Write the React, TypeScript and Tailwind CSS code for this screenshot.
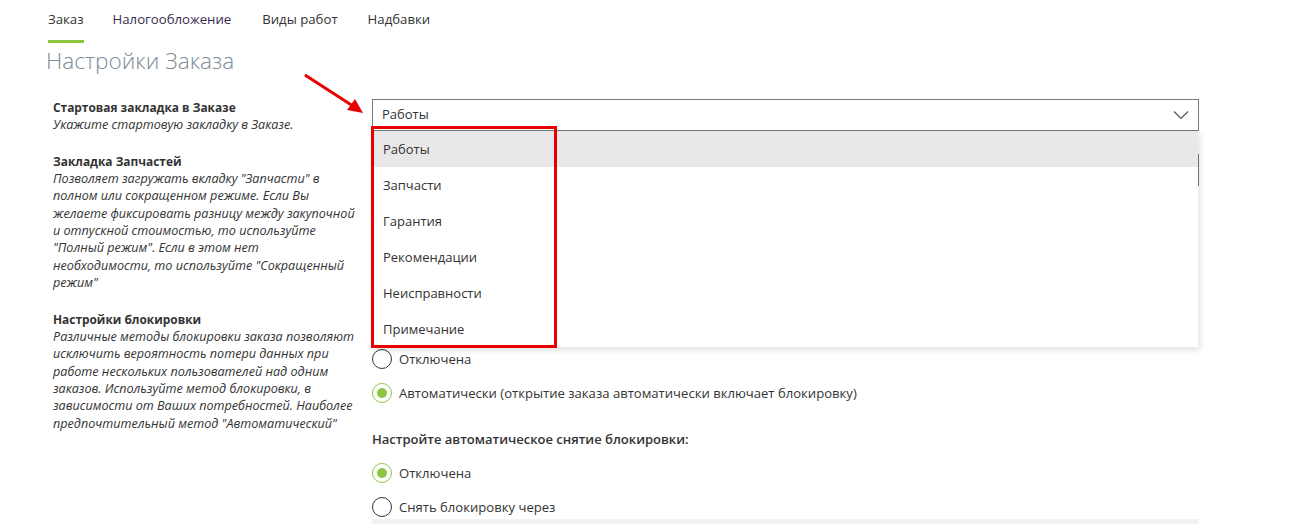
import React from "react";

const font = { fontFamily: '"Open Sans", "Noto Sans", sans-serif' };

function Radio({ checked, label, last }: { checked?: boolean; label: string; last?: boolean }) {
  return (
    <div className={`flex items-center gap-[7px] ${last ? "h-[29px] items-start pt-[7px]" : "h-[34px]"}`}>
      {checked ? (
        <span className="flex h-[20px] w-[20px] items-center justify-center rounded-full border-[1.5px] border-[#8cc63f]">
          <span className="h-[10px] w-[10px] rounded-full bg-[#8cc63f]" />
        </span>
      ) : (
        <span className="h-[20px] w-[20px] rounded-full border-[1.5px] border-[#333]" />
      )}
      <span className="text-[13.1px] leading-[20px] text-[#333]">{label}</span>
    </div>
  );
}

function Select({ value }: { value?: string }) {
  return (
    <div className="flex h-[32px] items-center justify-between border border-[#7a7a7a] bg-white pl-[9px] pr-[9px]">
      <span className="text-[13px] text-[#333]">{value}</span>
      <svg width="16" height="10" viewBox="0 0 16 10" fill="none">
        <path d="M1 1.5 L8 8.5 L15 1.5" stroke="#555" strokeWidth="1.2" />
      </svg>
    </div>
  );
}

const labelCls = "text-[11.9px] font-bold leading-[17px] text-[#333]";
const descCls = "text-[12.6px] italic leading-[17.3px] text-[#333]";

export default function App() {
  const items = ["Работы", "Запчасти", "Гарантия", "Рекомендации", "Неисправности", "Примечание"];
  return (
    <div className="relative h-[524px] w-[1300px] overflow-hidden bg-white" style={font}>
      {/* Tabs */}
      <div className="flex pl-[48px] pt-[10px] text-[13.2px]">
        <div className="mr-[29px] border-b-[3px] border-[#8cc63f] pb-[10px] text-[#333]">Заказ</div>
        <div className="mr-[31px] pb-[10px] text-[#3b2a4f]">Налогообложение</div>
        <div className="mr-[30px] pb-[10px] text-[#333]">Виды работ</div>
        <div className="pb-[10px] text-[#333]">Надбавки</div>
      </div>
      <h1 className="ml-[46px] mt-[1px] text-[22.6px] font-light leading-[34px] text-[#7d8b99]">Настройки Заказа</h1>

      {/* Form */}
      <div className="mt-[21px] grid grid-cols-[306px_827px] gap-x-[13px] pl-[53px]">
        {/* Row 1 */}
        <div>
          <div className={labelCls}>Стартовая закладка в Заказе</div>
          <div className={descCls}>Укажите стартовую закладку в Заказе.</div>
        </div>
        <div>
          <Select value="Работы" />
        </div>

        {/* Row 2 */}
        <div className="mt-[20px]">
          <div className={labelCls}>Закладка Запчастей</div>
          <div className={descCls}>
            Позволяет загружать вкладку "Запчасти" в полном или сокращенном режиме. Если Вы желаете фиксировать
            разницу между закупочной и отпускной стоимостью, то используйте "Полный режим". Если в этом нет
            необходимости, то используйте "Сокращенный режим"
          </div>
        </div>
        <div className="mt-[21px]">
          <Select />
        </div>

        {/* Row 3 */}
        <div className="mt-[20px]">
          <div className={labelCls}>Настройки блокировки</div>
          <div className={descCls}>
            Различные методы блокировки заказа позволяют исключить вероятность потери данных при работе нескольких
            пользователей над одним заказов. Используйте метод блокировки, в зависимости от Ваших потребностей.
            Наиболее предпочтительный метод "Автоматический"
          </div>
        </div>
        <div className="mt-[17px]">
          <div className="h-[34px]" />
          <Radio label="Отключена" />
          <Radio checked label="Автоматически (открытие заказа автоматически включает блокировку)" />
          <div className="h-[46px] pt-[19px] text-[13px] font-semibold leading-[20px] text-[#333]">
            Настройте автоматическое снятие блокировки:
          </div>
          <Radio checked label="Отключена" />
          <Radio last label="Снять блокировку через" />
          <div className="h-[32px] bg-[#f2f2f2]" />
        </div>
      </div>

      {/* Dropdown overlay */}
      <div className="absolute left-[372px] top-[131px] w-[826px] bg-white shadow-[2px_3px_6px_rgba(0,0,0,0.12)]">
        {items.map((it, i) => (
          <div
            key={it}
            className={`flex h-[36px] items-center pl-[11px] pt-[1px] text-[13px] text-[#333] ${i === 0 ? "bg-[#e8e8e8]" : ""}`}
          >
            {it}
          </div>
        ))}
      </div>

      {/* Annotation: red box */}
      <div className="pointer-events-none absolute left-[371px] top-[126px] h-[222px] w-[186px] border-[3px] border-[#e60000]" />

      {/* Annotation: red arrow */}
      <svg className="pointer-events-none absolute left-[300px] top-[70px]" width="70" height="50" viewBox="0 0 70 50">
        <line x1="5" y1="5" x2="56" y2="38" stroke="#e60000" strokeWidth="3" />
        <polygon points="63,43 47,40 55,29" fill="#e60000" />
      </svg>
    </div>
  );
}
